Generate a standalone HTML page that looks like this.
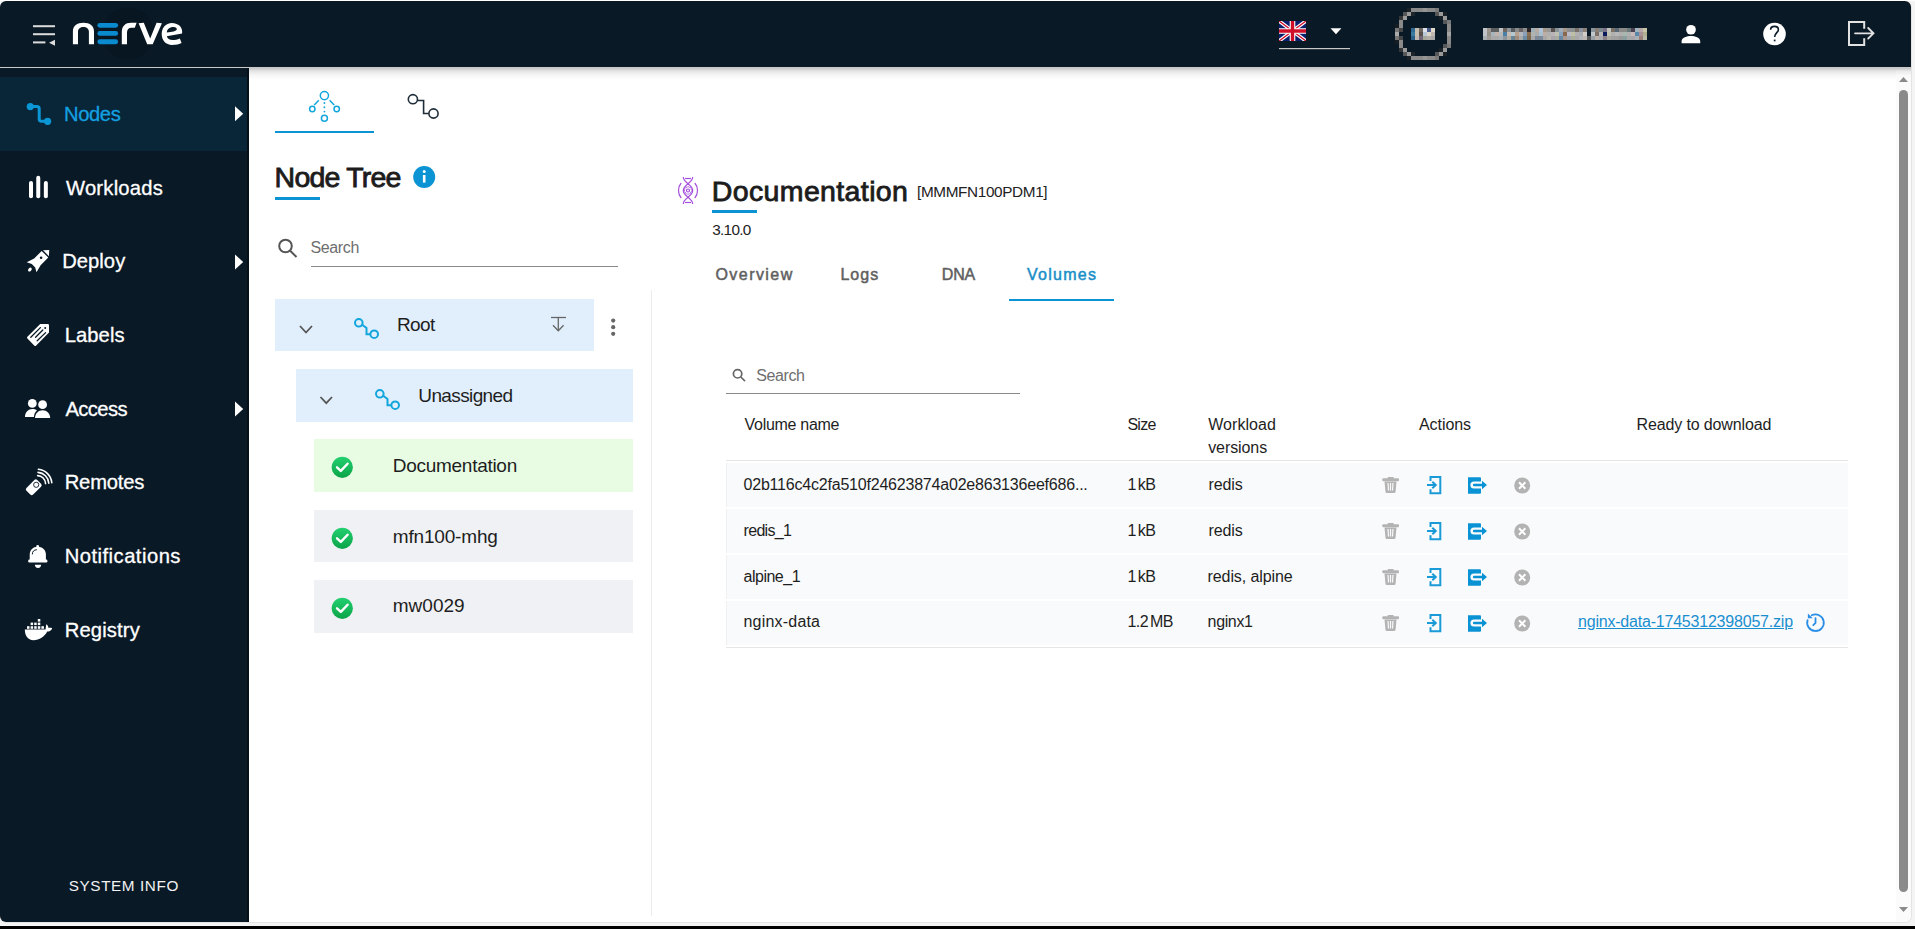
<!DOCTYPE html>
<html><head><meta charset="utf-8"><style>
html,body{margin:0;padding:0;width:1915px;height:929px;overflow:hidden;background:#fff;font-family:"Liberation Sans", sans-serif;}
</style></head><body>
<div style="position:absolute;left:0px;top:0px;width:1915px;height:929px;background:#f4f4f4;"></div>
<div style="position:absolute;left:0px;top:0px;width:1915px;height:1px;background:#ffffff;"></div>
<div style="position:absolute;left:0px;top:926px;width:1915px;height:3px;background:#000000;"></div>
<div style="position:absolute;left:0px;top:1px;width:1912px;height:922px;background:#e4e4e4;border-radius:7px;"></div>
<div style="position:absolute;left:0px;top:1px;width:1911px;height:921px;background:#ffffff;border-radius:6px;overflow:hidden;"></div>
<div style="position:absolute;left:0px;top:1px;width:1911px;height:66px;background:#0a1926;border-radius:6px 6px 0 0;"></div>
<div style="position:absolute;left:0px;top:67px;width:1911px;height:1px;background:#c9c9c9;"></div>
<div style="position:absolute;left:249px;top:68px;width:1662px;height:12px;background:linear-gradient(#c4c4c4,#e4e4e4 25%,#f6f6f6 60%,#ffffff);"></div>
<div style="position:absolute;left:0px;top:68px;width:249px;height:854px;background:#0a1926;border-radius:0 0 0 6px;"></div>
<div style="position:absolute;left:247px;top:68px;width:2px;height:854px;background:#050f18;"></div>
<div style="position:absolute;left:0px;top:77px;width:247px;height:74px;background:#082638;"></div>
<div style="position:absolute;left:275px;top:131px;width:99px;height:2px;background:#0b93d4;"></div>
<div style="position:absolute;left:275px;top:197px;width:45px;height:3px;background:#0b93d4;"></div>
<div style="position:absolute;left:311px;top:266px;width:307px;height:1px;background:#8a8a8a;"></div>
<div style="position:absolute;left:651px;top:290px;width:1px;height:626px;background:#ececec;"></div>
<div style="position:absolute;left:275px;top:299px;width:319px;height:52px;background:#e1effc;"></div>
<div style="position:absolute;left:296px;top:369px;width:337px;height:53px;background:#e1effc;"></div>
<div style="position:absolute;left:314px;top:439px;width:319px;height:53px;background:#e8fce4;"></div>
<div style="position:absolute;left:314px;top:510px;width:319px;height:52px;background:#f0f1f4;"></div>
<div style="position:absolute;left:314px;top:580px;width:319px;height:53px;background:#f0f1f4;"></div>
<div style="position:absolute;left:712px;top:210px;width:45px;height:3px;background:#0b93d4;"></div>
<div style="position:absolute;left:1009px;top:299px;width:105px;height:2px;background:#0b93d4;"></div>
<div style="position:absolute;left:726px;top:393px;width:294px;height:1px;background:#8a8a8a;"></div>
<div style="position:absolute;left:726px;top:460px;width:1122px;height:1px;background:#e6e6e6;"></div>
<div style="position:absolute;left:726px;top:463px;width:1122px;height:44px;background:#f9fafb;border-left:1px solid #eef0f2;box-sizing:border-box;"></div>
<div style="position:absolute;left:726px;top:509px;width:1122px;height:44px;background:#f9fafb;border-left:1px solid #eef0f2;box-sizing:border-box;"></div>
<div style="position:absolute;left:726px;top:555px;width:1122px;height:44px;background:#f9fafb;border-left:1px solid #eef0f2;box-sizing:border-box;"></div>
<div style="position:absolute;left:726px;top:601px;width:1122px;height:44px;background:#f9fafb;border-left:1px solid #eef0f2;box-sizing:border-box;"></div>
<div style="position:absolute;left:726px;top:647px;width:1122px;height:1px;background:#e6e6e6;"></div>
<div style="position:absolute;left:1896px;top:68px;width:15px;height:854px;background:#fbfbfb;border-radius:0 0 6px 0;"></div>
<div style="position:absolute;left:1896px;top:68px;width:15px;height:12px;background:linear-gradient(rgba(150,150,150,0.55),rgba(190,190,190,0.3) 25%,rgba(230,230,230,0.12) 60%,rgba(255,255,255,0));"></div>
<div style="position:absolute;left:1899px;top:90px;width:9px;height:802px;background:#8a8a8a;border-radius:4.5px;"></div>
<div style="position:absolute;left:64.00px;top:103.90px;font-size:20.2px;line-height:1;color:#14a0e0;font-weight:400;letter-spacing:-0.400px;white-space:nowrap;-webkit-text-stroke:0.3px #14a0e0;">Nodes</div>
<div style="position:absolute;left:66.00px;top:177.90px;font-size:20.2px;line-height:1;color:#fff;font-weight:400;letter-spacing:0.225px;white-space:nowrap;-webkit-text-stroke:0.3px #fff;">Workloads</div>
<div style="position:absolute;left:62.20px;top:250.90px;font-size:20.2px;line-height:1;color:#fff;font-weight:400;letter-spacing:0.040px;white-space:nowrap;-webkit-text-stroke:0.3px #fff;">Deploy</div>
<div style="position:absolute;left:64.70px;top:324.90px;font-size:20.2px;line-height:1;color:#fff;font-weight:400;letter-spacing:0.080px;white-space:nowrap;-webkit-text-stroke:0.3px #fff;">Labels</div>
<div style="position:absolute;left:65.40px;top:398.90px;font-size:20.2px;line-height:1;color:#fff;font-weight:400;letter-spacing:-0.560px;white-space:nowrap;-webkit-text-stroke:0.3px #fff;">Access</div>
<div style="position:absolute;left:64.70px;top:471.90px;font-size:20.2px;line-height:1;color:#fff;font-weight:400;letter-spacing:-0.167px;white-space:nowrap;-webkit-text-stroke:0.3px #fff;">Remotes</div>
<div style="position:absolute;left:64.70px;top:545.90px;font-size:20.2px;line-height:1;color:#fff;font-weight:400;letter-spacing:0.483px;white-space:nowrap;-webkit-text-stroke:0.3px #fff;">Notifications</div>
<div style="position:absolute;left:64.70px;top:619.90px;font-size:20.2px;line-height:1;color:#fff;font-weight:400;letter-spacing:0.143px;white-space:nowrap;-webkit-text-stroke:0.3px #fff;">Registry</div>
<div style="position:absolute;left:68.80px;top:877.75px;font-size:15.3px;line-height:1;color:#f2f2f2;font-weight:400;letter-spacing:0.580px;white-space:nowrap;">SYSTEM INFO</div>
<div style="position:absolute;left:274.60px;top:163.27px;font-size:28.5px;line-height:1;color:#1c1c1c;font-weight:400;letter-spacing:-0.775px;white-space:nowrap;-webkit-text-stroke:0.85px #1c1c1c;">Node Tree</div>
<div style="position:absolute;left:310.40px;top:240.05px;font-size:16px;line-height:1;color:#6e6e6e;font-weight:400;letter-spacing:-0.360px;white-space:nowrap;">Search</div>
<div style="position:absolute;left:397.00px;top:314.91px;font-size:19px;line-height:1;color:#1e1e1e;font-weight:400;letter-spacing:-0.600px;white-space:nowrap;">Root</div>
<div style="position:absolute;left:418.30px;top:385.91px;font-size:19px;line-height:1;color:#1e1e1e;font-weight:400;letter-spacing:-0.622px;white-space:nowrap;">Unassigned</div>
<div style="position:absolute;left:392.80px;top:456.21px;font-size:19px;line-height:1;color:#1e1e1e;font-weight:400;letter-spacing:-0.283px;white-space:nowrap;">Documentation</div>
<div style="position:absolute;left:392.80px;top:526.91px;font-size:19px;line-height:1;color:#1e1e1e;font-weight:400;letter-spacing:-0.178px;white-space:nowrap;">mfn100-mhg</div>
<div style="position:absolute;left:392.80px;top:596.41px;font-size:19px;line-height:1;color:#1e1e1e;font-weight:400;letter-spacing:-0.000px;white-space:nowrap;">mw0029</div>
<div style="position:absolute;left:711.80px;top:177.27px;font-size:28.5px;line-height:1;color:#1c1c1c;font-weight:400;letter-spacing:0.367px;white-space:nowrap;-webkit-text-stroke:0.85px #1c1c1c;">Documentation</div>
<div style="position:absolute;left:917.00px;top:183.55px;font-size:15.3px;line-height:1;color:#222;font-weight:400;letter-spacing:-0.354px;white-space:nowrap;">[MMMFN100PDM1]</div>
<div style="position:absolute;left:712.30px;top:222.45px;font-size:15.3px;line-height:1;color:#222;font-weight:400;letter-spacing:-0.720px;white-space:nowrap;">3.10.0</div>
<div style="position:absolute;left:715.50px;top:266.75px;font-size:16px;line-height:1;color:#5f5f5f;font-weight:400;letter-spacing:1.429px;white-space:nowrap;-webkit-text-stroke:0.5px #5f5f5f;">Overview</div>
<div style="position:absolute;left:840.40px;top:266.75px;font-size:16px;line-height:1;color:#5f5f5f;font-weight:400;letter-spacing:1.067px;white-space:nowrap;-webkit-text-stroke:0.5px #5f5f5f;">Logs</div>
<div style="position:absolute;left:941.70px;top:266.75px;font-size:16px;line-height:1;color:#5f5f5f;font-weight:400;letter-spacing:-0.100px;white-space:nowrap;-webkit-text-stroke:0.5px #5f5f5f;">DNA</div>
<div style="position:absolute;left:1027.00px;top:266.75px;font-size:16px;line-height:1;color:#1a8fc8;font-weight:400;letter-spacing:1.267px;white-space:nowrap;-webkit-text-stroke:0.5px #1a8fc8;">Volumes</div>
<div style="position:absolute;left:756.20px;top:367.75px;font-size:16px;line-height:1;color:#6e6e6e;font-weight:400;letter-spacing:-0.400px;white-space:nowrap;">Search</div>
<div style="position:absolute;left:744.60px;top:416.85px;font-size:16px;line-height:1;color:#1e1e1e;font-weight:400;letter-spacing:-0.300px;white-space:nowrap;">Volume name</div>
<div style="position:absolute;left:1127.40px;top:416.85px;font-size:16px;line-height:1;color:#1e1e1e;font-weight:400;letter-spacing:-0.733px;white-space:nowrap;">Size</div>
<div style="position:absolute;left:1208.20px;top:416.85px;font-size:16px;line-height:1;color:#1e1e1e;font-weight:400;letter-spacing:0.057px;white-space:nowrap;">Workload</div>
<div style="position:absolute;left:1208.20px;top:439.85px;font-size:16px;line-height:1;color:#1e1e1e;font-weight:400;letter-spacing:-0.086px;white-space:nowrap;">versions</div>
<div style="position:absolute;left:1419.00px;top:416.85px;font-size:16px;line-height:1;color:#1e1e1e;font-weight:400;letter-spacing:-0.067px;white-space:nowrap;">Actions</div>
<div style="position:absolute;left:1636.60px;top:416.85px;font-size:16px;line-height:1;color:#1e1e1e;font-weight:400;letter-spacing:-0.138px;white-space:nowrap;">Ready to download</div>
<div style="position:absolute;left:743.50px;top:476.95px;font-size:16px;line-height:1;color:#1e1e1e;font-weight:400;letter-spacing:-0.205px;white-space:nowrap;">02b116c4c2fa510f24623874a02e863136eef686...</div>
<div style="position:absolute;left:1127.50px;top:476.95px;font-size:16px;line-height:1;color:#1e1e1e;font-weight:400;letter-spacing:-0.550px;word-spacing:-2.00px;white-space:nowrap;">1 kB</div>
<div style="position:absolute;left:1208.40px;top:476.95px;font-size:16px;line-height:1;color:#1e1e1e;font-weight:400;letter-spacing:-0.050px;white-space:nowrap;">redis</div>
<div style="position:absolute;left:743.50px;top:522.95px;font-size:16px;line-height:1;color:#1e1e1e;font-weight:400;letter-spacing:-0.667px;white-space:nowrap;">redis_1</div>
<div style="position:absolute;left:1127.50px;top:522.95px;font-size:16px;line-height:1;color:#1e1e1e;font-weight:400;letter-spacing:-0.550px;word-spacing:-2.00px;white-space:nowrap;">1 kB</div>
<div style="position:absolute;left:1208.40px;top:522.95px;font-size:16px;line-height:1;color:#1e1e1e;font-weight:400;letter-spacing:-0.050px;white-space:nowrap;">redis</div>
<div style="position:absolute;left:743.50px;top:568.95px;font-size:16px;line-height:1;color:#1e1e1e;font-weight:400;letter-spacing:-0.486px;white-space:nowrap;">alpine_1</div>
<div style="position:absolute;left:1127.50px;top:568.95px;font-size:16px;line-height:1;color:#1e1e1e;font-weight:400;letter-spacing:-0.550px;word-spacing:-2.00px;white-space:nowrap;">1 kB</div>
<div style="position:absolute;left:1207.60px;top:568.95px;font-size:16px;line-height:1;color:#1e1e1e;font-weight:400;letter-spacing:-0.100px;white-space:nowrap;">redis, alpine</div>
<div style="position:absolute;left:743.50px;top:614.05px;font-size:16px;line-height:1;color:#1e1e1e;font-weight:400;letter-spacing:0.200px;white-space:nowrap;">nginx-data</div>
<div style="position:absolute;left:1127.50px;top:614.05px;font-size:16px;line-height:1;color:#1e1e1e;font-weight:400;letter-spacing:-0.550px;word-spacing:-2.00px;white-space:nowrap;">1.2 MB</div>
<div style="position:absolute;left:1207.60px;top:614.05px;font-size:16px;line-height:1;color:#1e1e1e;font-weight:400;letter-spacing:-0.360px;white-space:nowrap;">nginx1</div>
<div style="position:absolute;left:1578.00px;top:614.45px;font-size:16px;line-height:1;color:#1a8fd0;font-weight:400;letter-spacing:-0.207px;white-space:nowrap;text-decoration:underline;">nginx-data-1745312398057.zip</div>
<svg style="position:absolute;left:0;top:0" width="1915" height="929" viewBox="0 0 1915 929"><defs><linearGradient id="gr" x1="0" y1="0" x2="0" y2="1"><stop offset="0" stop-color="#23d070"/><stop offset="1" stop-color="#0aa448"/></linearGradient></defs>
<g stroke="#dcdcdc" stroke-width="2"><line x1="33" y1="26.2" x2="55" y2="26.2"/><line x1="33" y1="34.2" x2="55" y2="34.2"/><line x1="33" y1="42.4" x2="45.4" y2="42.4"/></g><path d="M55 39.8 L55 45.8 L49 42.8 Z" fill="#dcdcdc"/>
<circle cx="128" cy="33.5" r="26" fill="#07141e" opacity="0.6"/>
<g fill="#ffffff"><path d="M72.9 44.3 V31.5 C72.9 26 77 22.7 83.45 22.7 C89.9 22.7 94 26 94 31.5 V44.3 H88.9 V31.8 C88.9 28.9 86.6 27.1 83.45 27.1 C80.3 27.1 78 28.9 78 31.8 V44.3 Z"/><path d="M121.8 44.3 V32 C121.8 26 125.5 22.75 131 22.75 H136.6 L134.8 27.7 H131.5 C128.7 27.7 127 29.5 127 32.5 V44.3 Z"/><path d="M138.6 23.3 L143.8 22.8 L150.2 38.5 L156.6 22.8 L161.9 23.3 L152.7 44.2 H147.2 Z"/><path fill-rule="evenodd" d="M182.1 33.4 V31 C182.1 26.5 177.5 22.9 172 22.9 C165.5 22.9 161.7 28 161.7 34 C161.7 40.5 166 44.9 172 44.9 C176 44.9 179.5 44 181.6 42.9 L179.8 38.5 C177.5 39.6 175 40.1 172.5 40.1 C169.5 40.1 167.3 38.6 166.8 36.3 Z M166.8 32.4 C167 28.5 170.5 27 173.5 27 C175.8 27 177 28 176.8 29.5 C176.5 31 172 32.2 166.8 32.4 Z"/></g><g fill="#0a8bd0"><rect x="97.4" y="22.9" width="20.7" height="4.8" rx="2.4"/><rect x="97.4" y="31.05" width="20.7" height="4.8" rx="2.4"/><rect x="97.4" y="39.35" width="20.7" height="4.8" rx="2.4"/></g>
<clipPath id="fc"><rect x="1279" y="21" width="27" height="20"/></clipPath><g clip-path="url(#fc)"><g transform="translate(1279,21)"><rect width="27" height="20" fill="#0a1f6e"/><path d="M0 0 L27 20 M27 0 L0 20" stroke="#fff" stroke-width="3.6"/><path d="M0 0 L27 20 M27 0 L0 20" stroke="#d0102a" stroke-width="1.4"/><path d="M13.5 0 V20 M0 10 H27" stroke="#fff" stroke-width="5.6"/><path d="M13.5 0 V20 M0 10 H27" stroke="#d0102a" stroke-width="3.4"/></g></g>
<path d="M1330.5 28.3 H1341.4 L1336 34.3 Z" fill="#ffffff"/>
<rect x="1279" y="48" width="71" height="1.2" fill="#c8c8c8"/>
<g shape-rendering="crispEdges"><rect x="1407" y="8" width="4" height="4" fill="#1a2228"/><rect x="1411" y="8" width="4" height="4" fill="#8a8a8a"/><rect x="1415" y="8" width="4" height="4" fill="#8a8a8a"/><rect x="1419" y="8" width="4" height="4" fill="#8a8a8a"/><rect x="1423" y="8" width="4" height="4" fill="#959595"/><rect x="1427" y="8" width="4" height="4" fill="#8a8a8a"/><rect x="1431" y="8" width="4" height="4" fill="#8a8a8a"/><rect x="1435" y="8" width="4" height="4" fill="#7a7a7a"/><rect x="1403" y="12" width="4" height="4" fill="#555759"/><rect x="1407" y="12" width="4" height="4" fill="#9a9a9a"/><rect x="1411" y="12" width="4" height="4" fill="#1e262c"/><rect x="1435" y="12" width="4" height="4" fill="#555759"/><rect x="1439" y="12" width="4" height="4" fill="#9a9a9a"/><rect x="1443" y="12" width="4" height="4" fill="#1a2228"/><rect x="1399" y="16" width="4" height="4" fill="#343638"/><rect x="1403" y="16" width="4" height="4" fill="#9a9a9a"/><rect x="1439" y="16" width="4" height="4" fill="#1a2228"/><rect x="1443" y="16" width="4" height="4" fill="#9a9a9a"/><rect x="1399" y="20" width="4" height="4" fill="#8a8a8a"/><rect x="1443" y="20" width="4" height="4" fill="#555759"/><rect x="1447" y="20" width="4" height="4" fill="#7a7a7a"/><rect x="1395" y="24" width="4" height="4" fill="#161e24"/><rect x="1399" y="24" width="4" height="4" fill="#8a8a8a"/><rect x="1447" y="24" width="4" height="4" fill="#8a8a8a"/><rect x="1395" y="28" width="4" height="4" fill="#777777"/><rect x="1399" y="28" width="4" height="4" fill="#444648"/><rect x="1447" y="28" width="4" height="4" fill="#8a8a8a"/><rect x="1395" y="32" width="4" height="4" fill="#aaaaaa"/><rect x="1447" y="32" width="4" height="4" fill="#a5a5a5"/><rect x="1395" y="36" width="4" height="4" fill="#777777"/><rect x="1399" y="36" width="4" height="4" fill="#444648"/><rect x="1447" y="36" width="4" height="4" fill="#8a8a8a"/><rect x="1395" y="40" width="4" height="4" fill="#161e24"/><rect x="1399" y="40" width="4" height="4" fill="#8a8a8a"/><rect x="1447" y="40" width="4" height="4" fill="#8a8a8a"/><rect x="1399" y="44" width="4" height="4" fill="#8a8a8a"/><rect x="1443" y="44" width="4" height="4" fill="#555759"/><rect x="1447" y="44" width="4" height="4" fill="#7a7a7a"/><rect x="1399" y="48" width="4" height="4" fill="#343638"/><rect x="1403" y="48" width="4" height="4" fill="#9a9a9a"/><rect x="1439" y="48" width="4" height="4" fill="#1a2228"/><rect x="1443" y="48" width="4" height="4" fill="#9a9a9a"/><rect x="1403" y="52" width="4" height="4" fill="#555759"/><rect x="1407" y="52" width="4" height="4" fill="#9a9a9a"/><rect x="1411" y="52" width="4" height="4" fill="#1e262c"/><rect x="1435" y="52" width="4" height="4" fill="#555759"/><rect x="1439" y="52" width="4" height="4" fill="#9a9a9a"/><rect x="1443" y="52" width="4" height="4" fill="#1a2228"/><rect x="1407" y="56" width="4" height="4" fill="#1a2228"/><rect x="1411" y="56" width="4" height="4" fill="#8a8a8a"/><rect x="1415" y="56" width="4" height="4" fill="#8a8a8a"/><rect x="1419" y="56" width="4" height="4" fill="#8a8a8a"/><rect x="1423" y="56" width="4" height="4" fill="#959595"/><rect x="1427" y="56" width="4" height="4" fill="#8a8a8a"/><rect x="1431" y="56" width="4" height="4" fill="#8a8a8a"/><rect x="1435" y="56" width="4" height="4" fill="#7a7a7a"/><rect x="1411" y="28" width="4" height="4" fill="#2e6a94"/><rect x="1415" y="28" width="4" height="4" fill="#c5bdb0"/><rect x="1419" y="28" width="4" height="4" fill="#6e655e"/><rect x="1423" y="28" width="4" height="4" fill="#dde3e8"/><rect x="1427" y="28" width="4" height="4" fill="#4a5a8a"/><rect x="1431" y="28" width="4" height="4" fill="#e0d8c8"/><rect x="1411" y="32" width="4" height="4" fill="#3a7aa0"/><rect x="1415" y="32" width="4" height="4" fill="#c8bfb2"/><rect x="1419" y="32" width="4" height="4" fill="#5a5048"/><rect x="1423" y="32" width="4" height="4" fill="#b8c8d8"/><rect x="1427" y="32" width="4" height="4" fill="#dcd6c8"/><rect x="1431" y="32" width="4" height="4" fill="#c0b8b0"/><rect x="1411" y="36" width="4" height="4" fill="#2a6088"/><rect x="1415" y="36" width="4" height="4" fill="#c0b8ae"/><rect x="1419" y="36" width="4" height="4" fill="#706478"/><rect x="1423" y="36" width="4" height="4" fill="#a8a898"/><rect x="1427" y="36" width="4" height="4" fill="#b0aca8"/><rect x="1431" y="36" width="4" height="4" fill="#a8a8a8"/></g>
<g shape-rendering="crispEdges"><rect x="1483" y="28" width="4" height="4" fill="#c0c4c8"/><rect x="1483" y="32" width="4" height="4" fill="#c0c4c8"/><rect x="1483" y="36" width="4" height="4" fill="#a8b0b4"/><rect x="1487" y="28" width="4" height="4" fill="#9a948c"/><rect x="1487" y="32" width="4" height="4" fill="#949088"/><rect x="1487" y="36" width="4" height="4" fill="#a09a94"/><rect x="1491" y="28" width="4" height="4" fill="#5c5e60"/><rect x="1491" y="32" width="4" height="4" fill="#a8b4bc"/><rect x="1491" y="36" width="4" height="4" fill="#a8a8a8"/><rect x="1495" y="28" width="4" height="4" fill="#5c5e60"/><rect x="1495" y="32" width="4" height="4" fill="#c0b4ac"/><rect x="1495" y="36" width="4" height="4" fill="#a8a8a8"/><rect x="1499" y="28" width="4" height="4" fill="#c0c4c8"/><rect x="1499" y="32" width="4" height="4" fill="#b8b8b8"/><rect x="1499" y="36" width="4" height="4" fill="#a8b0b4"/><rect x="1503" y="28" width="4" height="4" fill="#706660"/><rect x="1503" y="32" width="4" height="4" fill="#4a80a8"/><rect x="1503" y="36" width="4" height="4" fill="#8c949c"/><rect x="1507" y="28" width="4" height="4" fill="#8c949c"/><rect x="1507" y="32" width="4" height="4" fill="#c8bcb0"/><rect x="1507" y="36" width="4" height="4" fill="#b0aca4"/><rect x="1511" y="28" width="4" height="4" fill="#585c60"/><rect x="1511" y="32" width="4" height="4" fill="#b4c8d0"/><rect x="1511" y="36" width="4" height="4" fill="#6a8494"/><rect x="1515" y="28" width="4" height="4" fill="#8a8c8c"/><rect x="1515" y="32" width="4" height="4" fill="#b8a08c"/><rect x="1515" y="36" width="4" height="4" fill="#a08c7c"/><rect x="1519" y="28" width="4" height="4" fill="#6c6468"/><rect x="1519" y="32" width="4" height="4" fill="#b4b8bc"/><rect x="1519" y="36" width="4" height="4" fill="#a8a8a8"/><rect x="1523" y="28" width="4" height="4" fill="#8c9090"/><rect x="1523" y="32" width="4" height="4" fill="#8aa0b8"/><rect x="1523" y="36" width="4" height="4" fill="#6a8aa4"/><rect x="1527" y="28" width="4" height="4" fill="#2a2428"/><rect x="1527" y="32" width="4" height="4" fill="#8a7050"/><rect x="1527" y="36" width="4" height="4" fill="#7a6850"/><rect x="1531" y="28" width="4" height="4" fill="#a0b0b8"/><rect x="1531" y="32" width="4" height="4" fill="#b0b4b4"/><rect x="1531" y="36" width="4" height="4" fill="#a8a8a8"/><rect x="1535" y="28" width="4" height="4" fill="#b8aca4"/><rect x="1535" y="32" width="4" height="4" fill="#acacac"/><rect x="1535" y="36" width="4" height="4" fill="#7a8898"/><rect x="1539" y="28" width="4" height="4" fill="#b0c4d8"/><rect x="1539" y="32" width="4" height="4" fill="#a8c0d0"/><rect x="1539" y="36" width="4" height="4" fill="#7a8898"/><rect x="1543" y="28" width="4" height="4" fill="#a89888"/><rect x="1543" y="32" width="4" height="4" fill="#bcaca4"/><rect x="1543" y="36" width="4" height="4" fill="#a8a8a8"/><rect x="1547" y="28" width="4" height="4" fill="#989898"/><rect x="1547" y="32" width="4" height="4" fill="#b0b0b0"/><rect x="1547" y="36" width="4" height="4" fill="#b8b4ac"/><rect x="1551" y="28" width="4" height="4" fill="#5a5250"/><rect x="1551" y="32" width="4" height="4" fill="#b8b4b8"/><rect x="1551" y="36" width="4" height="4" fill="#a8a4ac"/><rect x="1555" y="28" width="4" height="4" fill="#8a9498"/><rect x="1555" y="32" width="4" height="4" fill="#c0c0b0"/><rect x="1555" y="36" width="4" height="4" fill="#a8aca0"/><rect x="1559" y="28" width="4" height="4" fill="#a0acb8"/><rect x="1559" y="32" width="4" height="4" fill="#8aa4c0"/><rect x="1559" y="36" width="4" height="4" fill="#6888a4"/><rect x="1563" y="28" width="4" height="4" fill="#a89888"/><rect x="1563" y="32" width="4" height="4" fill="#8a6850"/><rect x="1563" y="36" width="4" height="4" fill="#a89890"/><rect x="1567" y="28" width="4" height="4" fill="#909090"/><rect x="1567" y="32" width="4" height="4" fill="#b8bcc8"/><rect x="1567" y="36" width="4" height="4" fill="#a0a4ac"/><rect x="1571" y="28" width="4" height="4" fill="#8a9090"/><rect x="1571" y="32" width="4" height="4" fill="#c0c0a8"/><rect x="1571" y="36" width="4" height="4" fill="#a8ac98"/><rect x="1575" y="28" width="4" height="4" fill="#7a7068"/><rect x="1575" y="32" width="4" height="4" fill="#b0b0b0"/><rect x="1575" y="36" width="4" height="4" fill="#a8a8a8"/><rect x="1579" y="28" width="4" height="4" fill="#8a909c"/><rect x="1579" y="32" width="4" height="4" fill="#a8acb0"/><rect x="1579" y="36" width="4" height="4" fill="#b0b4b8"/><rect x="1583" y="28" width="4" height="4" fill="#8a8078"/><rect x="1583" y="32" width="4" height="4" fill="#d0ccc8"/><rect x="1583" y="36" width="4" height="4" fill="#c0b8b4"/><rect x="1587" y="28" width="4" height="4" fill="#0a1926"/><rect x="1587" y="32" width="4" height="4" fill="#0a1926"/><rect x="1587" y="36" width="4" height="4" fill="#585c5c"/><rect x="1591" y="28" width="4" height="4" fill="#8a949c"/><rect x="1591" y="32" width="4" height="4" fill="#c0c8cc"/><rect x="1591" y="36" width="4" height="4" fill="#9aa0a8"/><rect x="1595" y="28" width="4" height="4" fill="#8a8078"/><rect x="1595" y="32" width="4" height="4" fill="#7a7068"/><rect x="1595" y="36" width="4" height="4" fill="#b8b0a8"/><rect x="1599" y="28" width="4" height="4" fill="#7a8890"/><rect x="1599" y="32" width="4" height="4" fill="#b8b8b8"/><rect x="1599" y="36" width="4" height="4" fill="#a8acb0"/><rect x="1603" y="28" width="4" height="4" fill="#7a7088"/><rect x="1603" y="32" width="4" height="4" fill="#0a1a5a"/><rect x="1603" y="36" width="4" height="4" fill="#8a8088"/><rect x="1607" y="28" width="4" height="4" fill="#c0c4bc"/><rect x="1607" y="32" width="4" height="4" fill="#c0c0b0"/><rect x="1607" y="36" width="4" height="4" fill="#a8a8a0"/><rect x="1611" y="28" width="4" height="4" fill="#7a7068"/><rect x="1611" y="32" width="4" height="4" fill="#b0b0b0"/><rect x="1611" y="36" width="4" height="4" fill="#a0a0a0"/><rect x="1615" y="28" width="4" height="4" fill="#5a6a78"/><rect x="1615" y="32" width="4" height="4" fill="#b8b8b8"/><rect x="1615" y="36" width="4" height="4" fill="#a0a0a0"/><rect x="1619" y="28" width="4" height="4" fill="#8a8a88"/><rect x="1619" y="32" width="4" height="4" fill="#b0b0b0"/><rect x="1619" y="36" width="4" height="4" fill="#989898"/><rect x="1623" y="28" width="4" height="4" fill="#8a8a88"/><rect x="1623" y="32" width="4" height="4" fill="#a8b8b0"/><rect x="1623" y="36" width="4" height="4" fill="#8aa0a0"/><rect x="1627" y="28" width="4" height="4" fill="#6a7a7a"/><rect x="1627" y="32" width="4" height="4" fill="#b0b0b0"/><rect x="1627" y="36" width="4" height="4" fill="#a8a8a8"/><rect x="1631" y="28" width="4" height="4" fill="#4a4050"/><rect x="1631" y="32" width="4" height="4" fill="#c8b8b8"/><rect x="1631" y="36" width="4" height="4" fill="#a8a4a8"/><rect x="1635" y="28" width="4" height="4" fill="#a0b4c0"/><rect x="1635" y="32" width="4" height="4" fill="#5a88a8"/><rect x="1635" y="36" width="4" height="4" fill="#a8b0b8"/><rect x="1639" y="28" width="4" height="4" fill="#b8a8a8"/><rect x="1639" y="32" width="4" height="4" fill="#a89098"/><rect x="1639" y="36" width="4" height="4" fill="#988078"/><rect x="1643" y="28" width="4" height="4" fill="#c8c4a8"/><rect x="1643" y="32" width="4" height="4" fill="#b0b090"/><rect x="1643" y="36" width="4" height="4" fill="#b8b8a8"/></g>
<circle cx="1691" cy="29.75" r="4.85" fill="#fff"/><path d="M1681.6 43.2 V41 C1681.6 37.5 1687 35.9 1691 35.9 C1695 35.9 1700.2 37.5 1700.2 41 V43.2 Z" fill="#fff"/>
<circle cx="1774.5" cy="34" r="11.3" fill="#fff"/><path d="M1770.6 29.8 C1770.6 27.6 1772.4 26.4 1774.5 26.4 C1776.8 26.4 1778.4 27.8 1778.4 29.8 C1778.4 32.5 1774.6 33 1774.6 37" fill="none" stroke="#0a1926" stroke-width="1.6"/><rect x="1773.8" y="39.6" width="1.7" height="1.7" fill="#0a1926"/>
<path d="M1864.2 28.8 V22 H1849 V45 H1864.2 V38.3" fill="none" stroke="#e2e2e2" stroke-width="2"/><path d="M1855 33.3 H1873 M1868.2 28 L1873.5 33.3 L1868.2 38.5" fill="none" stroke="#e2e2e2" stroke-width="1.8" stroke-linecap="round"/>
<path d="M235 106.3 L243.2 113.8 L235 121.3 Z" fill="#ffffff"/>
<path d="M235 254.5 L243.2 262 L235 269.5 Z" fill="#ffffff"/>
<path d="M235 401.5 L243.2 409 L235 416.5 Z" fill="#ffffff"/>
<g fill="#0b96d6"><circle cx="30.3" cy="106.6" r="3.6"/><circle cx="47.6" cy="121.3" r="3.6"/></g><path d="M30.3 106.6 H37 Q39.2 106.6 39.2 108.8 V119 Q39.2 121.2 41.4 121.2 H47.6" fill="none" stroke="#0b96d6" stroke-width="3"/>
<g stroke="#fff" stroke-width="4" stroke-linecap="round"><line x1="31" y1="183" x2="31" y2="196.2"/><line x1="38.25" y1="177.8" x2="38.25" y2="196.2"/><line x1="45.85" y1="183" x2="45.85" y2="196.2"/></g>
<g transform="translate(38.6,260.6) rotate(45)" fill="#fff"><path d="M-4.2 -10.4 L4.2 -10.4 L0 -15 Z"/><path d="M-4.65 -9 H4.65 V1.8 L6.8 9.8 L2.4 7.2 H-2.4 L-7.2 9.6 L-4.65 1.6 Z"/><ellipse cx="0.2" cy="12.5" rx="1.5" ry="2.2"/></g><circle cx="41.1" cy="257.8" r="1.3" fill="#0a1926"/>
<path d="M40.2 324 H47.8 Q49 324 49 325.2 V332.6 L36.2 345.4 Q35.2 346.4 34.2 345.4 L27.4 338.6 Q26.6 337.6 27.4 336.8 Z" fill="#fff"/><circle cx="45.2" cy="328" r="1" fill="#0a1926"/><g stroke="#0a1926" stroke-width="1.3" stroke-linecap="round"><line x1="30.8" y1="337.2" x2="40.4" y2="327.6"/><line x1="35.6" y1="337.2" x2="42.8" y2="330"/><line x1="37.2" y1="340.8" x2="45.6" y2="332.6"/></g>
<circle cx="32.3" cy="403.4" r="4.4" fill="#fff"/><circle cx="42.6" cy="404.7" r="4.4" fill="#fff"/><path d="M25 417 C25 412 28.5 409 32.3 409 C34 409 35.5 409.5 37 410.3 C35 412 34 414.5 34 417 Z" fill="#fff"/><path d="M35 418 C35 413.5 38.5 410.2 42.6 410.2 C46.7 410.2 50.2 413.5 50.2 418 Z" fill="#fff"/>
<rect x="-4.7" y="-7.6" width="9.4" height="15.2" rx="2" fill="#fff" transform="translate(33.75,487.3) rotate(45)"/><circle cx="36.2" cy="484.8" r="2.6" fill="none" stroke="#0a1926" stroke-width="0.9"/><g fill="none" stroke="#fff" stroke-width="1.6" stroke-linecap="round"><path d="M37.6 475.6 A8.4 8.4 0 0 1 45.6 483.6"/><path d="M38 472.4 A11.6 11.6 0 0 1 48.8 483.2"/><path d="M38.4 469.3 A14.8 14.8 0 0 1 51.8 482.8"/></g>
<g transform="translate(0,0.8)"><path d="M29.7 559.5 V554 C29.7 549 33 546 37.7 546 C42.4 546 45.9 549 45.9 554 V559.5 Z" fill="#fff"/><rect x="28.2" y="558.8" width="19.2" height="2.8" rx="1.2" fill="#fff"/><circle cx="37.7" cy="545.6" r="1.4" fill="#fff"/><path d="M34.9 564 H41.1 A3.1 3.1 0 0 1 34.9 564 Z" fill="#fff"/><path d="M32.3 553.6 A4.8 4.8 0 0 1 36.8 548.9" fill="none" stroke="#0a1926" stroke-width="1"/></g>
<path d="M24.8 629.6 H45.5 C46 627.5 45.8 625.5 46.4 624.2 C47.6 625 48.6 626.5 48.4 628 C49.8 627.6 51 627.7 52.2 628.2 C51.5 630.3 49.5 631.6 47.2 631.6 C44.5 637 39.5 640.2 33.5 640.2 C27.5 640.2 25 635.5 24.8 629.6 Z" fill="#fff"/><g fill="#fff"><rect x="27.0" y="626.2" width="2.5" height="2.6"/><rect x="30.6" y="626.2" width="2.5" height="2.6"/><rect x="34.2" y="626.2" width="2.5" height="2.6"/><rect x="37.8" y="626.2" width="2.5" height="2.6"/><rect x="41.4" y="626.2" width="2.5" height="2.6"/><rect x="30.6" y="622.6" width="2.5" height="2.5"/><rect x="34.2" y="622.6" width="2.5" height="2.5"/><rect x="37.8" y="622.6" width="2.5" height="2.5"/><rect x="37.8" y="619" width="2.5" height="2.6"/></g>
<g fill="none" stroke="#12a6dc" stroke-width="1.5"><circle cx="324.4" cy="95.6" r="4.1"/><circle cx="312.3" cy="109" r="2.7"/><circle cx="336.7" cy="109" r="2.7"/><circle cx="324.4" cy="118.3" r="3"/><line x1="314.2" y1="105" x2="318.8" y2="100.3"/><line x1="334.2" y1="105" x2="329.6" y2="100.3"/></g><g fill="#12a6dc"><circle cx="324.4" cy="103" r="0.95"/><circle cx="324.4" cy="107.3" r="0.95"/><circle cx="324.4" cy="111.6" r="0.95"/></g>
<g fill="none" stroke="#1f2d38" stroke-width="1.6"><circle cx="412.9" cy="99.2" r="4.6"/><circle cx="433.5" cy="113.5" r="4.6"/><path d="M417.5 100.5 H423.6 V113.5 H428.9"/></g>
<circle cx="424.2" cy="177" r="11" fill="#0b93d4"/><rect x="422.9" y="175" width="2.6" height="7.6" fill="#fff"/><circle cx="424.2" cy="171.6" r="1.5" fill="#fff"/>
<g fill="none" stroke="#555" stroke-width="2"><circle cx="285.5" cy="246" r="6.3"/><line x1="290.2" y1="250.7" x2="296.5" y2="257"/></g>
<path d="M300 326 L306 332.5 L312 326" fill="none" stroke="#555" stroke-width="1.8"/>
<g fill="none" stroke="#12a6dc" stroke-width="2"><circle cx="358.8" cy="322.8" r="3.8"/><circle cx="374.2" cy="334.2" r="3.8"/><path d="M362.2 324.8 L366.5 328 V334.2 H370.4"/></g>
<g stroke="#666" stroke-width="1.3" fill="none"><line x1="551" y1="317.5" x2="566" y2="317.5"/><line x1="558.3" y1="317.5" x2="558.3" y2="331"/><path d="M553 325.3 L558.3 330.8 L563.6 325.3"/></g>
<g fill="#666"><circle cx="613.2" cy="320.6" r="2.1"/><circle cx="613.2" cy="327.2" r="2.1"/><circle cx="613.2" cy="333.8" r="2.1"/></g>
<path d="M320.5 397 L326.3 403.2 L332 397" fill="none" stroke="#555" stroke-width="1.8"/>
<g fill="none" stroke="#12a6dc" stroke-width="2"><circle cx="379.8" cy="393.8" r="3.8"/><circle cx="395.2" cy="405.2" r="3.8"/><path d="M383.2 395.8 L387.5 399 V405.2 H391.4"/></g>
<circle cx="342.3" cy="467.3" r="10.6" fill="url(#gr)"/><path d="M337 467.3 L340.8 470.90000000000003 L347.6 463.7" fill="none" stroke="#fff" stroke-width="2.4" stroke-linecap="round" stroke-linejoin="round"/>
<circle cx="342.3" cy="538.3" r="10.6" fill="url(#gr)"/><path d="M337 538.3 L340.8 541.9 L347.6 534.6999999999999" fill="none" stroke="#fff" stroke-width="2.4" stroke-linecap="round" stroke-linejoin="round"/>
<circle cx="342.3" cy="608.3" r="10.6" fill="url(#gr)"/><path d="M337 608.3 L340.8 611.9 L347.6 604.6999999999999" fill="none" stroke="#fff" stroke-width="2.4" stroke-linecap="round" stroke-linejoin="round"/>
<g fill="none" stroke="#a54fdc" stroke-width="1.2"><path d="M683.3 177 C683.3 183 692.7 184.5 692.7 190.5 C692.7 196.5 683.3 198 683.3 204"/><path d="M692.7 177 C692.7 183 683.3 184.5 683.3 190.5 C683.3 196.5 692.7 198 692.7 204"/><circle cx="688" cy="190.5" r="3.6" stroke-dasharray="1.2 0.8"/><circle cx="688" cy="190.5" r="1.5"/><path d="M681.2 183 C677.6 187 677.6 194 681.2 198 M694.8 183 C698.4 187 698.4 194 694.8 198"/><line x1="685" y1="178.5" x2="691" y2="178.5"/><line x1="685" y1="202.5" x2="691" y2="202.5"/></g>
<g fill="none" stroke="#666" stroke-width="1.7"><circle cx="737.6" cy="373.8" r="4.2"/><line x1="740.8" y1="377" x2="745" y2="381.2"/></g>
<g fill="#b3b3b3"><rect x="1382.3" y="478.2" width="16.7" height="3" rx="1"/><rect x="1387.5" y="477" width="6.3" height="2" rx="1"/><path d="M1384.5 481.5 H1396.5 L1395.5 492 Q1395.3 493 1394.3 493 H1386.7 Q1385.7 493 1385.5 492 Z"/></g><g stroke="#f9fafb" stroke-width="1.2"><line x1="1388" y1="483" x2="1388.5" y2="490.5"/><line x1="1390.5" y1="483" x2="1390.5" y2="490.5"/><line x1="1393" y1="483" x2="1392.5" y2="490.5"/></g>
<g fill="none" stroke="#1a9ad6" stroke-width="2"><path d="M1430.5 481 V477 H1440.3 V493.3 H1430.5 V489.3"/><path d="M1427 485 H1435.5 M1432.3 481.7 L1435.8 485 L1432.3 488.3"/></g>
<path d="M1468 477.2 H1480 Q1481 477.2 1481 478.2 V481.4 H1474 A3.6 3.6 0 0 0 1474 488.6 H1481 V492.8 Q1481 493.8 1480 493.8 H1468 Z" fill="#0a93d4"/><path d="M1474.2 483.7 H1482 V480.8 L1487 485 L1482 489.2 V486.3 H1474.2 A1.3 1.3 0 0 1 1474.2 483.7 Z" fill="#0a93d4"/>
<circle cx="1522.2" cy="485.5" r="8" fill="#b3b3b3"/><path d="M1519 482.3 L1525.4 488.7 M1525.4 482.3 L1519 488.7" stroke="#fff" stroke-width="2"/>
<g fill="#b3b3b3"><rect x="1382.3" y="524.2" width="16.7" height="3" rx="1"/><rect x="1387.5" y="523" width="6.3" height="2" rx="1"/><path d="M1384.5 527.5 H1396.5 L1395.5 538 Q1395.3 539 1394.3 539 H1386.7 Q1385.7 539 1385.5 538 Z"/></g><g stroke="#f9fafb" stroke-width="1.2"><line x1="1388" y1="529" x2="1388.5" y2="536.5"/><line x1="1390.5" y1="529" x2="1390.5" y2="536.5"/><line x1="1393" y1="529" x2="1392.5" y2="536.5"/></g>
<g fill="none" stroke="#1a9ad6" stroke-width="2"><path d="M1430.5 527 V523 H1440.3 V539.3 H1430.5 V535.3"/><path d="M1427 531 H1435.5 M1432.3 527.7 L1435.8 531 L1432.3 534.3"/></g>
<path d="M1468 523.2 H1480 Q1481 523.2 1481 524.2 V527.4 H1474 A3.6 3.6 0 0 0 1474 534.6 H1481 V538.8 Q1481 539.8 1480 539.8 H1468 Z" fill="#0a93d4"/><path d="M1474.2 529.7 H1482 V526.8 L1487 531 L1482 535.2 V532.3 H1474.2 A1.3 1.3 0 0 1 1474.2 529.7 Z" fill="#0a93d4"/>
<circle cx="1522.2" cy="531.5" r="8" fill="#b3b3b3"/><path d="M1519 528.3 L1525.4 534.7 M1525.4 528.3 L1519 534.7" stroke="#fff" stroke-width="2"/>
<g fill="#b3b3b3"><rect x="1382.3" y="570.2" width="16.7" height="3" rx="1"/><rect x="1387.5" y="569" width="6.3" height="2" rx="1"/><path d="M1384.5 573.5 H1396.5 L1395.5 584 Q1395.3 585 1394.3 585 H1386.7 Q1385.7 585 1385.5 584 Z"/></g><g stroke="#f9fafb" stroke-width="1.2"><line x1="1388" y1="575" x2="1388.5" y2="582.5"/><line x1="1390.5" y1="575" x2="1390.5" y2="582.5"/><line x1="1393" y1="575" x2="1392.5" y2="582.5"/></g>
<g fill="none" stroke="#1a9ad6" stroke-width="2"><path d="M1430.5 573 V569 H1440.3 V585.3 H1430.5 V581.3"/><path d="M1427 577 H1435.5 M1432.3 573.7 L1435.8 577 L1432.3 580.3"/></g>
<path d="M1468 569.2 H1480 Q1481 569.2 1481 570.2 V573.4 H1474 A3.6 3.6 0 0 0 1474 580.6 H1481 V584.8 Q1481 585.8 1480 585.8 H1468 Z" fill="#0a93d4"/><path d="M1474.2 575.7 H1482 V572.8 L1487 577 L1482 581.2 V578.3 H1474.2 A1.3 1.3 0 0 1 1474.2 575.7 Z" fill="#0a93d4"/>
<circle cx="1522.2" cy="577.5" r="8" fill="#b3b3b3"/><path d="M1519 574.3 L1525.4 580.7 M1525.4 574.3 L1519 580.7" stroke="#fff" stroke-width="2"/>
<g fill="#b3b3b3"><rect x="1382.3" y="616.2" width="16.7" height="3" rx="1"/><rect x="1387.5" y="615" width="6.3" height="2" rx="1"/><path d="M1384.5 619.5 H1396.5 L1395.5 630 Q1395.3 631 1394.3 631 H1386.7 Q1385.7 631 1385.5 630 Z"/></g><g stroke="#f9fafb" stroke-width="1.2"><line x1="1388" y1="621" x2="1388.5" y2="628.5"/><line x1="1390.5" y1="621" x2="1390.5" y2="628.5"/><line x1="1393" y1="621" x2="1392.5" y2="628.5"/></g>
<g fill="none" stroke="#1a9ad6" stroke-width="2"><path d="M1430.5 619 V615 H1440.3 V631.3 H1430.5 V627.3"/><path d="M1427 623 H1435.5 M1432.3 619.7 L1435.8 623 L1432.3 626.3"/></g>
<path d="M1468 615.2 H1480 Q1481 615.2 1481 616.2 V619.4 H1474 A3.6 3.6 0 0 0 1474 626.6 H1481 V630.8 Q1481 631.8 1480 631.8 H1468 Z" fill="#0a93d4"/><path d="M1474.2 621.7 H1482 V618.8 L1487 623 L1482 627.2 V624.3 H1474.2 A1.3 1.3 0 0 1 1474.2 621.7 Z" fill="#0a93d4"/>
<circle cx="1522.2" cy="623.5" r="8" fill="#b3b3b3"/><path d="M1519 620.3 L1525.4 626.7 M1525.4 620.3 L1519 626.7" stroke="#fff" stroke-width="2"/>
<g fill="none" stroke="#2a8ee6" stroke-width="1.8" stroke-linecap="round"><path d="M1807.6 620.1 A8.3 8.3 0 1 0 1811.7 615.3"/><path d="M1815.5 618.2 V623 L1813.3 625.2"/></g><path d="M1807.9 613.4 L1807.9 618.2 L1812.7 618.2 Z" fill="#2a8ee6"/>
<path d="M1899 82 H1908 L1903.5 77 Z" fill="#8a8a8a"/><path d="M1899 907 H1908 L1903.5 912 Z" fill="#8a8a8a"/>
</svg>
</body></html>
